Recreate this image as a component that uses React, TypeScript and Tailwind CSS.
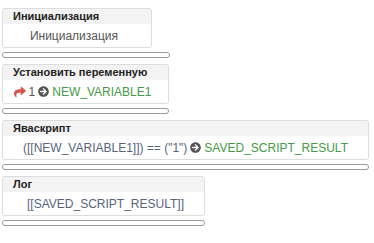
import { FaShare, FaArrowCircleRight } from 'react-icons/fa'

type Block = {
  title: string
  width: string
  bar: string
  body: React.ReactNode
}

const Var = ({ children }: { children: React.ReactNode }) => (
  <span className="text-[#469a46]">{children}</span>
)

const Arrow = () => <FaArrowCircleRight className="inline-block text-[11px] text-[#555] mx-[3px] -mt-[2px]" />

const blocks: Block[] = [
  {
    title: 'Инициализация',
    width: 'w-[150px]',
    bar: 'w-[168px]',
    body: <span className="text-[#555] -ml-[6px]">Инициализация</span>,
  },
  {
    title: 'Установить переменную',
    width: 'w-[167px]',
    bar: 'w-[167px]',
    body: (
      <span className="text-[#555] -ml-[6px]">
        <FaShare className="inline-block text-[12px] text-[#d9534f] mr-[3px] -mt-[2px]" />
        1<Arrow />
        <Var>NEW_VARIABLE1</Var>
      </span>
    ),
  },
  {
    title: 'Яваскрипт',
    width: 'w-[367px]',
    bar: 'w-[367px]',
    body: (
      <span className="text-[#57647c]">
        ([[NEW_VARIABLE1]]) == ("1")
        <Arrow />
        <Var>SAVED_SCRIPT_RESULT</Var>
      </span>
    ),
  },
  {
    title: 'Лог',
    width: 'w-[203px]',
    bar: 'w-[203px]',
    body: <span className="text-[#57647c] ml-[4px]">[[SAVED_SCRIPT_RESULT]]</span>,
  },
]

export default function App() {
  return (
    <div className="w-[374px] h-[243px] bg-white pt-[8px] pl-[2px] font-['Liberation_Sans',Arial,sans-serif]">
      {blocks.map((b, i) => (
        <div key={i} className="flex flex-col">
          <div className={`${b.width} h-[40px] border border-[#ddd] rounded-[3px] overflow-hidden flex flex-col`}>
            <div className="h-[15px] bg-[#f3f3f3] pl-[10px] text-[11px] font-bold leading-[15px] text-[#222]">
              {b.title}
            </div>
            <div className="flex-1 flex items-center justify-center text-[12px] leading-none pt-[1px]">
              {b.body}
            </div>
          </div>
          <div className={`${b.bar} h-[6px] mt-[4px] mb-[6px] border border-[#999] rounded-full bg-white`} />
        </div>
      ))}
    </div>
  )
}
